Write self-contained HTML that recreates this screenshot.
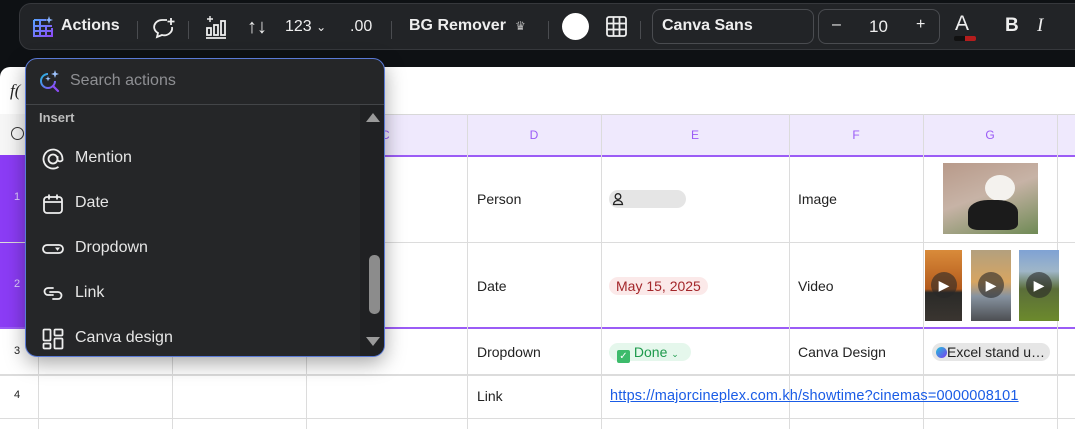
<!DOCTYPE html>
<html><head><meta charset="utf-8"><style>
*{box-sizing:border-box;margin:0;padding:0}
body{width:1075px;height:429px;overflow:hidden;background:#0e1114;font-family:"Liberation Sans",sans-serif;position:relative}
.a{position:absolute}
.sheet{left:0;top:67px;width:1075px;height:362px;background:#fff;border-radius:10px 0 0 0}
.vl{position:absolute;width:1px;background:#dcdcdc}
.hl{position:absolute;height:1px;background:#dcdcdc}
.t{position:absolute;font-size:14px;color:#222}
.hd{position:absolute;font-size:12px;color:#9b5cf6;text-align:center}
.tb{left:19px;top:3px;width:1070px;height:47px;background:#222427;border:1px solid #36383c;border-radius:12px}
.w{color:#eee;font-size:16px;position:absolute}
.sep{position:absolute;width:1px;height:18px;background:#4a4c50;top:17px}
.panel{left:25px;top:58px;width:360px;height:299px;background:#252628;border:1px solid #5a7ad6;border-radius:12px;overflow:hidden;box-shadow:0 6px 20px rgba(0,0,0,.35)}
.it{position:absolute;left:49px;font-size:16px;color:#e6e6e6}
.ic{position:absolute;left:16px}
</style></head><body>
<div class="a sheet">
 <div class="t" style="left:10px;top:14px;font-family:'Liberation Serif',serif;font-style:italic;font-size:17px">f(</div>
</div>
<div class="a" style="left:0;top:114px;width:1075px;height:41px;background:#efe9fd;border-top:1px solid #d8d8d8"></div>
<div class="a" style="left:0;top:114px;width:38px;height:41px;background:#f6f6f6"></div>
<div class="a" style="left:11px;top:127px;width:13px;height:13px;border:1.5px solid #333;border-radius:50%"></div>
<div class="a" style="left:0;top:155px;width:1075px;height:2px;background:#9b5cf6"></div>
<div class="a" style="left:0;top:155px;width:38px;height:173px;background:#8b3cf5"></div>
<div class="a" style="left:0;top:327px;width:1075px;height:2px;background:#9b5cf6"></div>
<div class="vl" style="left:38px;top:114px;height:315px"></div>
<div class="vl" style="left:172px;top:114px;height:315px"></div>
<div class="vl" style="left:306px;top:114px;height:315px"></div>
<div class="vl" style="left:467px;top:114px;height:315px"></div>
<div class="vl" style="left:601px;top:114px;height:315px"></div>
<div class="vl" style="left:789px;top:114px;height:315px"></div>
<div class="vl" style="left:923px;top:114px;height:315px"></div>
<div class="vl" style="left:1057px;top:114px;height:315px"></div>
<div class="hl" style="left:0;top:242px;width:1075px"></div>
<div class="hl" style="left:0;top:374px;width:1075px;height:2px"></div>
<div class="hl" style="left:0;top:418px;width:1075px"></div>
<div class="hd" style="left:467px;top:128px;width:134px">D</div>
<div class="hd" style="left:601px;top:128px;width:188px">E</div>
<div class="hd" style="left:789px;top:128px;width:134px">F</div>
<div class="hd" style="left:923px;top:128px;width:134px">G</div>
<div class="hd" style="left:306px;top:128px;width:161px;text-align:left;padding-left:75px">C</div>
<div class="t" style="left:14px;top:191px;font-size:11px;color:#e0d0ff">1</div>
<div class="t" style="left:14px;top:278px;font-size:11px;color:#e0d0ff">2</div>
<div class="t" style="left:14px;top:345px;font-size:11px">3</div>
<div class="t" style="left:14px;top:389px;font-size:11px">4</div>
<div class="t" style="left:477px;top:191px">Person</div>
<div class="t" style="left:477px;top:278px">Date</div>
<div class="t" style="left:477px;top:344px">Dropdown</div>
<div class="t" style="left:477px;top:388px">Link</div>
<div class="t" style="left:798px;top:191px">Image</div>
<div class="t" style="left:798px;top:278px">Video</div>
<div class="t" style="left:798px;top:344px">Canva Design</div>
<div class="a" style="left:609px;top:190px;width:77px;height:18px;background:#e5e5e5;border-radius:9px"></div>
<svg class="a" style="left:612px;top:192px" width="12" height="14" viewBox="0 0 12 14" fill="none" stroke="#222" stroke-width="1.3"><circle cx="6" cy="4.5" r="2.8"/><path d="M1.5 12.5a4.5 4 0 0 1 9 0z"/></svg>
<div class="a" style="left:609px;top:277px;width:99px;height:18px;background:#fbe9e9;border-radius:9px;font-size:14px;color:#a3262a;padding:1px 0 0 7px">May 15, 2025</div>
<div class="a" style="left:609px;top:343px;width:82px;height:18px;background:#e5f7ec;border-radius:9px;font-size:14px;color:#1e9a4c;padding:1px 0 0 8px"><span style="display:inline-block;width:13px;height:13px;background:#3dbb6b;border-radius:2px;vertical-align:-2px;color:#fff;font-size:10px;text-align:center;line-height:13px">✓</span> Done <span style="font-size:9px">⌄</span></div>
<div class="a" style="left:932px;top:343px;width:118px;height:18px;background:#e6e6e6;border-radius:9px;font-size:14px;color:#222;padding:1px 0 0 4px;white-space:nowrap"><span style="display:inline-block;width:11px;height:11px;border-radius:50%;background:linear-gradient(135deg,#20c4d8,#7b3cf0);vertical-align:-1px"></span>Excel stand u…</div>
<a class="t" style="left:610px;top:388px;color:#1a5ce6;text-decoration:underline;font-size:14.5px;letter-spacing:0.15px">https://majorcineplex.com.kh/showtime?cinemas=0000008101</a>
<div class="a" style="left:943px;top:163px;width:95px;height:71px;background:linear-gradient(160deg,#b89a8a,#c7b3a6 45%,#6f8a55 100%)"></div>
<div class="a" style="left:985px;top:175px;width:30px;height:26px;background:#f4f2ee;border-radius:50%"></div>
<div class="a" style="left:968px;top:200px;width:50px;height:30px;background:#1b1b1b;border-radius:40% 40% 20% 20%"></div>
<div class="a" style="left:925px;top:250px;width:37px;height:71px;background:linear-gradient(#d98b3a,#b35a1c 55%,#2a2a28 60%,#3a3530)"></div>
<div class="a" style="left:971px;top:250px;width:40px;height:71px;background:linear-gradient(#b3a07e,#d7a561 45%,#8793a0 65%,#4c4e52)"></div>
<div class="a" style="left:1019px;top:250px;width:40px;height:71px;background:linear-gradient(#7fa2d4,#9fb6c8 30%,#5b6e3a 55%,#6c8a2c)"></div>
<div class="a" style="left:931px;top:272px;width:26px;height:26px;border-radius:50%;background:rgba(40,40,40,.6);color:#fff;font-size:14px;text-align:center;line-height:26px">▶</div>
<div class="a" style="left:978px;top:272px;width:26px;height:26px;border-radius:50%;background:rgba(40,40,40,.6);color:#fff;font-size:14px;text-align:center;line-height:26px">▶</div>
<div class="a" style="left:1026px;top:272px;width:26px;height:26px;border-radius:50%;background:rgba(40,40,40,.6);color:#fff;font-size:14px;text-align:center;line-height:26px">▶</div>

<div class="a tb">
 <svg class="a" style="left:12px;top:11px" width="22" height="24" viewBox="0 0 22 24"><defs><linearGradient id="g" x1="0" y1="0" x2="1" y2="1"><stop offset="0" stop-color="#5aa0ff"/><stop offset="1" stop-color="#8b4cf6"/></linearGradient></defs><path d="M2 5h12M2 5v16h18v-8M2 11h18M2 16h18M8 5v16M14 11v10" stroke="url(#g)" stroke-width="2" fill="none"/><path d="M17 1l1 3 3 1-3 1-1 3-1-3-3-1 3-1z" fill="#8ab4ff"/></svg>
 <div class="w" style="left:41px;top:13px;font-weight:bold">Actions</div>
 <div class="sep" style="left:117px"></div>
 <svg class="a" style="left:132px;top:12px" width="24" height="24" viewBox="0 0 24 24" fill="none" stroke="#eee" stroke-width="1.8"><path d="M15 4H10a8 7 0 0 0-4 13l-1 4 5-2a8 7 0 0 0 10-8"/><path d="M19 2v7M15.5 5.5h7"/></svg>
 <div class="sep" style="left:168px"></div>
 <svg class="a" style="left:184px;top:10px" width="24" height="26" viewBox="0 0 24 26" fill="none" stroke="#eee" stroke-width="1.8"><rect x="3" y="14" width="4" height="7"/><rect x="10" y="11" width="4" height="10"/><rect x="17" y="7" width="4" height="14"/><path d="M2 24h20"/><path d="M6 2v6M3 5h6" stroke-width="1.4"/></svg>
 <div class="w" style="left:227px;top:12px;font-size:20px">↑↓</div>
 <div class="w" style="left:265px;top:14px">123 <span style="font-size:12px">⌄</span></div>
 <div class="w" style="left:330px;top:14px">.00</div>
 <div class="sep" style="left:371px"></div>
 <div class="w" style="left:389px;top:13px;font-weight:bold">BG Remover</div>
 <div class="w" style="left:495px;top:15px;font-size:12px;color:#bbb">♛</div>
 <div class="sep" style="left:528px"></div>
 <div class="a" style="left:542px;top:9px;width:27px;height:27px;border-radius:50%;background:#fff"></div>
 <svg class="a" style="left:586px;top:12px" width="22" height="22" viewBox="0 0 22 22" fill="none" stroke="#eee" stroke-width="1.8"><rect x="1" y="1" width="19" height="19" rx="2"/><path d="M7.5 1v19M13.5 1v19M1 7.5h19M1 13.5h19"/></svg>
 <div class="sep" style="left:620px"></div>
 <div class="a" style="left:632px;top:5px;width:162px;height:35px;border:1px solid #4a4c50;border-radius:8px"></div>
 <div class="w" style="left:642px;top:13px;font-weight:bold">Canva Sans</div>
 <div class="a" style="left:798px;top:5px;width:122px;height:35px;border:1px solid #4a4c50;border-radius:8px"></div>
 <div class="w" style="left:812px;top:12px">–</div>
 <div class="w" style="left:849px;top:13px;font-size:17px">10</div>
 <div class="w" style="left:896px;top:12px">+</div>
 <div class="w" style="left:935px;top:8px;font-size:21px">A</div>
 <div class="a" style="left:934px;top:32px;width:11px;height:5px;background:#111;border-radius:2px 0 0 2px"></div>
 <div class="a" style="left:945px;top:32px;width:11px;height:5px;background:#b51d1d;border-radius:0 2px 2px 0"></div>
 <div class="w" style="left:985px;top:11px;font-size:19px;font-weight:bold">B</div>
 <div class="w" style="left:1017px;top:11px;font-size:19px;font-style:italic;font-family:'Liberation Serif',serif">I</div>
</div>

<div class="a panel">
 <svg class="a" style="left:10px;top:10px" width="26" height="26" viewBox="0 0 26 26" fill="none"><defs><linearGradient id="g2" x1="0" y1="0" x2="1" y2="1"><stop offset="0" stop-color="#27b8e0"/><stop offset="1" stop-color="#8b4cf6"/></linearGradient></defs><path d="M12 5a7 7 0 1 0 7 7" stroke="url(#g2)" stroke-width="2"/><path d="M17 17l5 5" stroke="#8b4cf6" stroke-width="2.2" stroke-linecap="round"/><path d="M19 1l1 3 3 1-3 1-1 3-1-3-3-1 3-1z" fill="#9fc4ff"/><path d="M12 7l.7 2 2 .7-2 .7-.7 2-.7-2-2-.7 2-.7z" fill="#9fc4ff"/></svg>
 <div class="a" style="left:44px;top:13px;font-size:16px;color:#8e8f93">Search actions</div>
 <div class="a" style="left:0;top:45px;width:360px;height:1px;background:#434548"></div>
 <div class="a" style="left:334px;top:46px;width:25px;height:253px;background:#202123"></div>
 <div class="a" style="left:340px;top:54px;width:0;height:0;border-left:7px solid transparent;border-right:7px solid transparent;border-bottom:9px solid #9a9a9a"></div>
 <div class="a" style="left:340px;top:278px;width:0;height:0;border-left:7px solid transparent;border-right:7px solid transparent;border-top:9px solid #9a9a9a"></div>
 <div class="a" style="left:343px;top:196px;width:11px;height:59px;background:#8c8c8c;border-radius:5px"></div>
 <div class="a" style="left:13px;top:51px;font-size:13px;font-weight:bold;color:#bdbdbd">Insert</div>
 <svg class="ic" style="top:89px" width="22" height="22" viewBox="0 0 22 22" fill="none" stroke="#eee" stroke-width="1.8"><circle cx="11" cy="11" r="4.5"/><path d="M15.5 8v4a3 3 0 0 0 5 0V11a9.5 9.5 0 1 0-4 7.8"/></svg>
 <div class="it" style="top:90px">Mention</div>
 <svg class="ic" style="top:134px" width="22" height="22" viewBox="0 0 22 22" fill="none" stroke="#eee" stroke-width="1.8"><rect x="2" y="4" width="18" height="16" rx="3"/><path d="M2 9h18M7 1.5v5M15 1.5v5"/></svg>
 <div class="it" style="top:135px">Date</div>
 <svg class="ic" style="top:179px" width="22" height="22" viewBox="0 0 22 22" fill="none" stroke="#eee" stroke-width="1.8"><rect x="1" y="7" width="20" height="8" rx="4"/><path d="M14 10h3l-1.5 2z" fill="#eee" stroke-width="1"/></svg>
 <div class="it" style="top:180px">Dropdown</div>
 <svg class="ic" style="top:224px" width="22" height="22" viewBox="0 0 22 22" fill="none" stroke="#eee" stroke-width="1.8" stroke-linecap="round"><path d="M11 5H6a3.5 3.5 0 0 0 0 7h3"/><path d="M8 9h8a3.5 3.5 0 0 1 0 7h-5"/><path d="M11 12h-1"/></svg>
 <div class="it" style="top:225px">Link</div>
 <svg class="ic" style="top:269px" width="22" height="22" viewBox="0 0 22 22" fill="none" stroke="#eee" stroke-width="1.8"><rect x="1.5" y="1.5" width="7" height="11" rx="1"/><rect x="12.5" y="1.5" width="8" height="6" rx="1"/><rect x="1.5" y="15.5" width="7" height="5" rx="1"/><rect x="12.5" y="10.5" width="8" height="10" rx="1"/></svg>
 <div class="it" style="top:270px">Canva design</div>
</div>
</body></html>
